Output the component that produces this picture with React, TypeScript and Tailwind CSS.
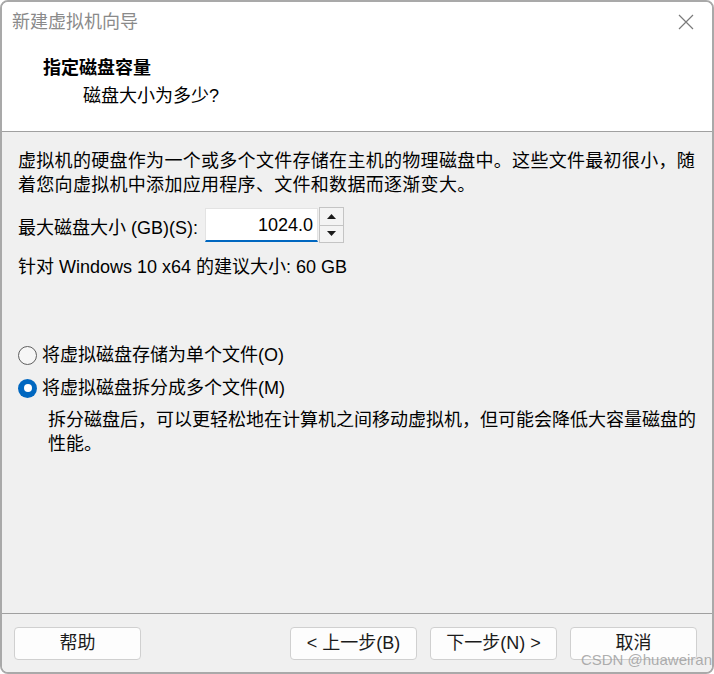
import React from 'react';

const font = { fontFamily: '"Liberation Sans", "Noto Sans CJK SC", sans-serif' };

function Radio({ checked }: { checked?: boolean }) {
  if (checked) {
    return (
      <span className="flex h-[19px] w-[19px] shrink-0 items-center justify-center rounded-full bg-[#0067c0]">
        <span className="h-[8px] w-[8px] rounded-full bg-white" />
      </span>
    );
  }
  return <span className="h-[19px] w-[19px] shrink-0 rounded-full border border-[#5f5f5f] bg-[#f6f6f6]" />;
}

function Btn({ children, className = '' }: { children: React.ReactNode; className?: string }) {
  return (
    <button
      className={`flex h-[33px] w-[127px] items-center justify-center rounded-[4px] border border-[#d0d0d0] bg-[#fdfdfd] text-[18px] text-[#1b1b1b] ${className}`}
    >
      {children}
    </button>
  );
}

export default function App() {
  return (
    <div className="relative h-[674px] w-[714px] overflow-hidden bg-white" style={font}>
      <div className="flex h-full w-full flex-col overflow-hidden rounded-[8px] border-2 border-[#a9a9a9]">
        {/* header */}
        <div className="h-[129px] shrink-0 bg-white">
          <div className="flex h-[40px] items-center justify-between pl-[10px] pr-[16px]">
            <span className="text-[18px] text-[#8a8a8a]">新建虚拟机向导</span>
            <svg width="16" height="16" viewBox="0 0 16 16" className="mr-[2px]">
              <path d="M1 1L15 15M15 1L1 15" stroke="#7a7a7a" strokeWidth="1.2" />
            </svg>
          </div>
          <div className="mt-[14px] pl-[41px] text-[18px] font-bold leading-[24px] text-black">指定磁盘容量</div>
          <div className="mt-[4px] pl-[81px] text-[18px] leading-[24px] text-black">磁盘大小为多少?</div>
        </div>
        <div className="h-px shrink-0 bg-[#a0a0a0]" />

        {/* body */}
        <div className="flex flex-1 flex-col bg-[#f0f0f0] px-[16px] pt-[17px] text-[18px] leading-[24px] text-black">
          <p className="whitespace-nowrap tracking-[0.3px]">
            虚拟机的硬盘作为一个或多个文件存储在主机的物理磁盘中。这些文件最初很小，随
            <br />
            着您向虚拟机中添加应用程序、文件和数据而逐渐变大。
          </p>

          <div className="mt-[10px] flex items-center">
            <span className="mt-[6px]">最大磁盘大小 (GB)(S):</span>
            <div className="ml-[7px] flex h-[34px] w-[113px] items-center justify-end border border-b-2 border-[#e3e3e3] border-b-[#0067c0] bg-white pr-[4px]">
              1024.0
            </div>
            <div className="ml-px flex h-[36px] w-[25px] flex-col border border-[#c4c4c4] bg-[#f0f0f0]">
              <div className="flex flex-1 items-center justify-center border-b border-[#c4c4c4] bg-[#f3f3f3]">
                <svg width="9" height="5" viewBox="0 0 9 5">
                  <path d="M0 5L4.5 0L9 5Z" fill="#1a1a1a" />
                </svg>
              </div>
              <div className="flex flex-1 items-center justify-center bg-[#f3f3f3]">
                <svg width="9" height="5" viewBox="0 0 9 5">
                  <path d="M0 0L4.5 5L9 0Z" fill="#1a1a1a" />
                </svg>
              </div>
            </div>
          </div>

          <p className="mt-[12px]">针对 Windows 10 x64 的建议大小: 60 GB</p>

          <div className="mt-[64px] flex items-center gap-[5px]">
            <Radio />
            <span>将虚拟磁盘存储为单个文件(O)</span>
          </div>
          <div className="mt-[9px] flex items-center gap-[5px]">
            <Radio checked />
            <span>将虚拟磁盘拆分成多个文件(M)</span>
          </div>
          <p className="mt-[8px] whitespace-nowrap pl-[30px]">
            拆分磁盘后，可以更轻松地在计算机之间移动虚拟机，但可能会降低大容量磁盘的
            <br />
            性能。
          </p>
        </div>

        <div className="h-px shrink-0 bg-[#a0a0a0]" />

        {/* footer */}
        <div className="flex h-[58px] shrink-0 items-start bg-[#f0f0f0] pl-[12px] pr-[15px] pt-[13px]">
          <Btn>帮助</Btn>
          <div className="ml-auto flex gap-[13px]">
            <Btn>&lt; 上一步(B)</Btn>
            <Btn>下一步(N) &gt;</Btn>
            <Btn>取消</Btn>
          </div>
        </div>
      </div>

      <span className="absolute bottom-[3px] right-[2px] text-[15px] text-[#9a9a9a]/80">CSDN @huaweiran</span>
    </div>
  );
}
